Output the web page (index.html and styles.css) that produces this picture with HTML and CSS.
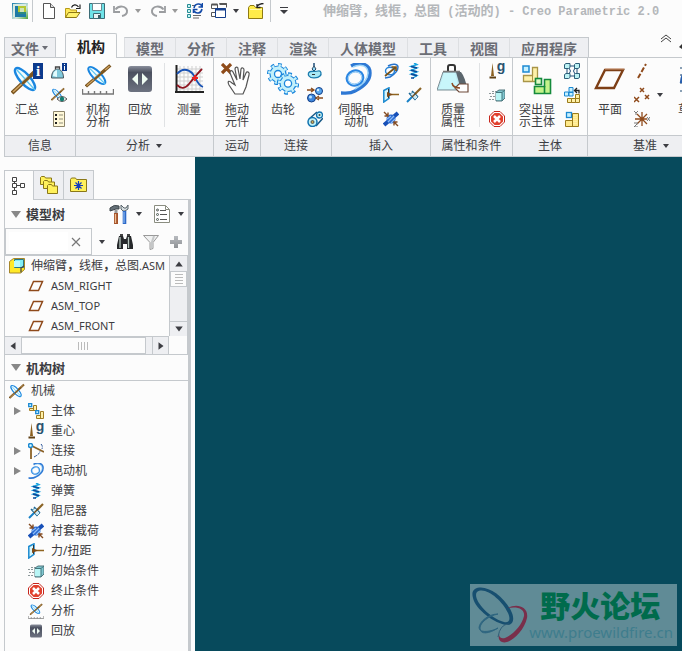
FILE: index.html
```html
<!DOCTYPE html>
<html lang="zh-CN">
<head>
<meta charset="utf-8">
<meta name="viewport" content="width=device-width, initial-scale=1">
<title>Creo Parametric 2.0</title>
<link rel="stylesheet" href="styles.css">
</head>
<body>
<svg class="defs" aria-hidden="true">
  <defs>
    <linearGradient id="gDark" x1="0" y1="0" x2="0" y2="1"><stop offset="0" stop-color="#8a8f9c"/><stop offset=".25" stop-color="#4b505f"/><stop offset="1" stop-color="#6d7280"/></linearGradient>
    <linearGradient id="gApp" x1="0" y1="0" x2="1" y2="1"><stop offset="0" stop-color="#1d7fae"/><stop offset=".6" stop-color="#cfe6da"/><stop offset="1" stop-color="#4da336"/></linearGradient>
    <linearGradient id="gPlus" x1="0" y1="0" x2="0" y2="1"><stop offset="0" stop-color="#b8bbbf"/><stop offset="1" stop-color="#8e9195"/></linearGradient>
  </defs>

  <symbol id="down" viewBox="0 0 8 8"><path d="M1 2h6L4 6z" fill="currentColor"/></symbol>
  <symbol id="app" viewBox="0 0 16 16"><rect width="16" height="16" fill="url(#gApp)"/><rect x="1" y="1" width="13" height="13" fill="#d8ebe2"/><path d="M3 3h3v8h8v3H3z" fill="#1d7aa6"/><path d="M6 3h8v8H6z" fill="#b5c832"/><path d="M8 5h4v4H8z" fill="#cfe3b8"/><path d="M6 9h8v2H6z" fill="#2c8a80"/></symbol>
  <symbol id="new" viewBox="0 0 16 16"><path d="M2.500 0.500h7l4 4v11h-11z" fill="#fff" stroke="#555"/><path d="M9.500 .5v4h4" fill="#ddd" stroke="#555"/></symbol>
  <symbol id="open" viewBox="0 0 16 16"><path d="M.5 14.500v-9h4l1 1.500h6v3" fill="#ffe95a" stroke="#b69a17"/><path d="M.5 14.500l3-5h11.500l-3.500 5z" fill="#fff26c" stroke="#8c7714"/><path d="M6.500 4.500c1-3 5-4 7-.5M15 1.500v4h-4" fill="none" stroke="#222" stroke-width="1.200"/></symbol>
  <symbol id="save" viewBox="0 0 16 16"><path d="M.5 .5h15v15H.5z" fill="#6fe3e8" stroke="#3c6c76"/><path d="M3.500 .5h9v7h-9z" fill="#fff" stroke="#6b8790"/><path d="M4.500 10.500h7v5h-7z" fill="#e8f4f5" stroke="#3c6c76"/><path d="M9 12h2v3H9z" fill="#3c5c66"/></symbol>
  <symbol id="undo" viewBox="0 0 16 16"><path d="M2.500 6.500C6 2 13 3 14 7.500c.5 3-2 5-5 5.500" fill="none" stroke="#9b9da0" stroke-width="2"/><path d="M1 3v6h6" fill="none" stroke="#9b9da0" stroke-width="1.800"/></symbol>
  <symbol id="regen" viewBox="0 0 16 16"><g fill="#c8f5f5" stroke="#268b94"><path d="M.5 1.500h3v3h-3zM.5 6.500h3v3h-3zM.5 11.500h3v3h-3z"/></g><path d="M5 2.500h3M6 12.500h8M6 15h6" stroke="#666"/><path d="M7 5c1-5 7-5 8-1.500M15.500 0v4h-4M15 6c-1 5-6 5-8 2M6.500 10V6.500h4" fill="none" stroke="#134aa8" stroke-width="1.600"/></symbol>
  <symbol id="windows" viewBox="0 0 16 16"><path d="M.5 1.500h6v4h-6zM8.500 .5h7v4M.5 9.500h4v4h-4z" fill="#fff" stroke="#555"/><path d="M.5 1.500h6M8.500 1h7" stroke="#555" stroke-width="2"/><path d="M4.500 5.500h10v9h-10z" fill="#fff" stroke="#153f8c"/><path d="M4 6.500h11" stroke="#153f8c" stroke-width="2"/></symbol>
  <symbol id="closef" viewBox="0 0 16 16"><path d="M.5 15.500v-11l1.500-2h4l1.500 2h7v11z" fill="#ffec4a" stroke="#8f7a12"/><path d="M2 6.500h12" stroke="#fff8b0"/><path d="M9 3.500c2-3 4-3 6.500-3M9 1v3.500h3.500" fill="none" stroke="#222" stroke-width="1.300"/></symbol>

  <symbol id="mech" viewBox="0 0 32 32"><path d="M1 30L30 3" stroke="#7b551f" stroke-width="4"/><path d="M2 29L29 4" stroke="#d3a765" stroke-width="1.500"/><g transform="rotate(48 14 16)"><ellipse cx="14" cy="16" rx="14" ry="5" fill="#e9fbff" fill-opacity=".6" stroke="#1a86e0" stroke-width="2.400"/><path d="M2 16h27" stroke="#59c4f0" stroke-width="1.400"/></g><path d="M11 21L24 9" stroke="#7b551f" stroke-width="2.600"/></symbol>
  <symbol id="summary" viewBox="0 0 32 32"><use href="#mech"/><rect x="22" y="0" width="10" height="16" fill="#0c3a8d"/><text x="27" y="13" text-anchor="middle" class="glyph-i" fill="#fff">i</text></symbol>
  <symbol id="analysis" viewBox="0 0 32 32"><svg x="3" y="0" width="27" height="25" viewBox="0 0 32 32" preserveAspectRatio="none"><use href="#mech"/></svg><path d="M.5 26v5h31v-5M6.500 28v3M12.500 28v3M18.500 28v3M24.500 28v3" fill="none" stroke="#777" stroke-width="1.400"/></symbol>
  <symbol id="massinfo" viewBox="0 0 16 16"><path d="M.5 15c0-6 3-9 6-9s6 3 6 9z" fill="#7fc9dc" stroke="#47565d"/><path d="M2 13c0-3 1-5 4-6v7z" fill="#e2fafc"/><path d="M4.500 6V4h4v2" fill="none" stroke="#444" stroke-width="1.300"/><rect x="11" y="0" width="5" height="8" fill="#0c3a8d"/><path d="M13 1h1v1h-1zM13 3h1v4h-1z" fill="#fff"/></symbol>
  <symbol id="mecheye" viewBox="0 0 16 16"><svg width="14" height="14" viewBox="0 0 32 32"><use href="#mech"/></svg><path d="M6 12q5-5 10 0-5 5-10 0z" fill="#eee" stroke="#555"/><circle cx="11" cy="12" r="2.200" fill="#137d71"/></symbol>
  <symbol id="sheet" viewBox="0 0 16 16"><path d="M2.500 .5h11v15h-11z" fill="#fff8d8" stroke="#8b836a"/><path d="M5 3v11" stroke="#222" stroke-dasharray="2 2" stroke-width="2"/><path d="M8 4h4M8 8h4M8 12h4" stroke="#8f8d7d"/></symbol>
  <symbol id="playback" viewBox="0 0 32 32"><rect x="4" y="3" width="24" height="26" rx="3" fill="url(#gDark)"/><path d="M14 10v12l-6-6zM18 10v12l6-6z" fill="#effbf2"/></symbol>
  <symbol id="measure" viewBox="0 0 32 32"><path d="M7 3v25M11 3v25M15 3v25M19 3v25M23 3v25M27 3v25M4 6h26M4 10h26M4 14h26M4 18h26M4 22h26M4 26h26" stroke="#cfcfcf"/><path d="M3.500 2v27M2 29h29" stroke="#222" stroke-width="2"/><path d="M4 11c5-6 11-5 15-1s5 12 11 14" fill="none" stroke="#1852b4" stroke-width="1.800"/><path d="M4 22c4 4 8 4 12-1s8-10 13-15" fill="none" stroke="#8e1620" stroke-width="1.800"/><path d="M22 12v6M19 15h6" stroke="#e22" stroke-width="1.800"/></symbol>
  <symbol id="drag" viewBox="0 0 32 32"><path d="M1 1l9 9M10 1L1 10" stroke="#8f4b19" stroke-width="3.200"/><path d="M14 31l-6-9c-2-4 0-5 3-2l3 2-5-12c0-3 2-3 3-1l4 8-2-11c0-2 3-3 3 0l2 10 1-10c1-2 3-1 3 1l-1 10 3-7c1-2 4-1 3 2l-3 12-3 7z" fill="#fff" stroke="#555" stroke-width="1.200"/></symbol>
  <symbol id="gears" viewBox="0 0 32 32">
    <g fill="none">
      <circle cx="11" cy="11" r="9" pathLength="16" stroke="#1a86dc" stroke-width="4" stroke-dasharray="1 1"/>
      <circle cx="11" cy="11" r="8" fill="#c3f0fa" stroke="#1a86dc" stroke-width="1.200"/>
      <circle cx="11" cy="11" r="8.500" pathLength="16" stroke="#c3f0fa" stroke-width="3" stroke-dasharray=".7 1.300" stroke-dashoffset="-.15"/>
      <circle cx="11" cy="11" r="3.500" fill="#fff" stroke="#1a86dc" stroke-width="1.300"/>
      <circle cx="21" cy="20.500" r="9" pathLength="16" stroke="#1a86dc" stroke-width="4.500" stroke-dasharray="1 1"/>
      <circle cx="21" cy="20.500" r="8" fill="#c3f0fa" stroke="#1a86dc" stroke-width="1.200"/>
      <circle cx="21" cy="20.500" r="8.500" pathLength="16" stroke="#c3f0fa" stroke-width="3.200" stroke-dasharray=".7 1.300" stroke-dashoffset="-.15"/>
      <circle cx="21" cy="20.500" r="3.600" fill="#fff" stroke="#1a86dc" stroke-width="1.300"/>
    </g>
  </symbol>
  <symbol id="cam" viewBox="0 0 16 16"><path d="M7 0v3" stroke="#1f4e7a" stroke-width="1.500"/><path d="M7 3l2 3-2 2-2-2z" fill="#9df" stroke="#27455c"/><path d="M1.500 10C3 7 8 9 11 8s4 3 2 5-9 3-11 0q-1-1-.5-3z" fill="#a9e8f5" stroke="#1b7bad" stroke-width="1.300"/><path d="M5 11.500h3" stroke="#333"/></symbol>
  <symbol id="contact" viewBox="0 0 16 16"><circle cx="12" cy="4" r="3.500" fill="#58a6ee" stroke="#123e86"/><circle cx="4.500" cy="11" r="4" fill="#3e86dc" stroke="#123e86"/><circle cx="3.500" cy="10" r="1.500" fill="#bfe5ff"/><circle cx="11" cy="3" r="1.200" fill="#d8f1ff"/><path d="M0 3h6M4 1l3 2-3 2M16 11h-5M12 9l-3 2 3 2" fill="none" stroke="#8a4a1a" stroke-width="1.300"/></symbol>
  <symbol id="belt" viewBox="0 0 16 16"><path d="M2 8l8-7M9 15l7-8" stroke="#1c5c88" stroke-width="1.500"/><circle cx="5.500" cy="11" r="4.500" fill="#bff2f8" stroke="#1273b0" stroke-width="1.500"/><circle cx="12.500" cy="4" r="3" fill="#bff2f8" stroke="#1273b0" stroke-width="1.300"/><circle cx="5.500" cy="11" r="1.500" fill="#c8a94e" stroke="#555"/><circle cx="12.500" cy="4" r="1" fill="#444"/></symbol>
  <symbol id="servo" viewBox="0 0 32 32"><path d="M11 3c9-5 19-2 19 7 0 8-7 14-15 18-5 3-9 2-14 2" fill="none" stroke="#2d78d4" stroke-width="3.400"/><path d="M13 4c8-4 15-1 15 6 0 7-6 12-13 16" fill="none" stroke="#9bd4f8" stroke-width="1.500"/><ellipse cx="15" cy="15" rx="8" ry="7" fill="none" stroke="#2b86e2" stroke-width="3" transform="rotate(-20 15 15)"/><ellipse cx="15" cy="15" rx="7" ry="6" fill="none" stroke="#b6e0fa" transform="rotate(-20 15 15)"/></symbol>
  <symbol id="forcemotor" viewBox="0 0 16 16"><path d="M5 3c5-3 10-2 10 1s-3 7-8 10l-5 1" fill="none" stroke="#2773cb" stroke-width="1.500"/><ellipse cx="7" cy="8" rx="4.500" ry="3.800" fill="none" stroke="#2583d7" stroke-width="1.400"/><path d="M2 13L13 4M8.500 4H13v4" fill="none" stroke="#7a5216" stroke-width="1.700"/></symbol>
  <symbol id="spring" viewBox="0 0 16 16"><path d="M8 0l3 1.500-6 2 6 1.500-6 2.300 6 1.500-6 2.300 6 1.500-4 2.400" fill="none" stroke="#19a4e0" stroke-width="1.400"/><path d="M5 3.500l6 1.500M5 7.300l6 1.500M5 11.100l6 1.500M5 15h3" stroke="#0c4a9a" stroke-width="1.600"/></symbol>
  <symbol id="force" viewBox="0 0 16 16"><path d="M.8 3.500L6 .8v10.500L.8 15z" fill="#d8f6fb" stroke="#1b8ad0" stroke-width="1.500"/><path d="M5.500 2v9" stroke="#333"/><path d="M4 7.500h12" stroke="#8f6420" stroke-width="1.500"/><path d="M10 7.500l-6-2.500v5z" fill="#7f4b19"/></symbol>
  <symbol id="damper" viewBox="0 0 16 16"><path d="M9 7l6-6" stroke="#8b6425" stroke-width="2.200"/><path d="M1 15l5-5" stroke="#1780c6" stroke-width="2"/><path d="M6 4l6 6M3 6l6.500 7" stroke="#1c6694" stroke-width="1.500"/><path d="M4 7l3-2 5 5-3 3z" fill="#cfeaf4" stroke="#2c7196" stroke-width=".8"/><path d="M6 10l4-4" stroke="#704d1e" stroke-width="1.500"/></symbol>
  <symbol id="bushing" viewBox="0 0 16 16"><path d="M1 14L15 2" stroke="#1750b8" stroke-width="4"/><circle cx="8" cy="8" r="4.500" fill="#2969d1"/><path d="M5 11l6-6M4 8l4-3M8 12l4-4" stroke="#8fbcf5" stroke-width="1.200"/><path d="M1 1l3.500 3.500M5 1.500V5H1.500M15 15l-3.500-3.500M11 14.500V11h3.500" fill="none" stroke="#834a20" stroke-width="1.400"/></symbol>
  <symbol id="mass" viewBox="0 0 32 32"><path d="M6 9h16l8 18H0z" fill="#bfe9f2" stroke="#7b8f96"/><path d="M19 9h5q4 5 6 16l-6 2z" fill="#5b666d"/><path d="M7 10h11l4 16H2z" fill="#c8f6fb"/><path d="M11 8V4q0-2 2-2h3q2 0 2 2v4" fill="none" stroke="#333" stroke-width="2"/><path d="M6 8.500h17" stroke="#777" stroke-width="1.500"/><path d="M18 25l4-4h9v8h-9z" fill="#fff" stroke="#6e4a3a" stroke-width="1.200"/><path d="M15 20q1 5 8 5" fill="none" stroke="#8c4b23" stroke-width="1.500"/></symbol>
  <symbol id="gravity" viewBox="0 0 16 16"><path d="M3.500 0l1.500 13H2z" fill="#8b6020"/><path d="M.5 14.500h6.500" stroke="#5e3e12" stroke-width="2"/><text x="12" y="8" text-anchor="middle" class="glyph-g" fill="#29526f">g</text></symbol>
  <symbol id="initial" viewBox="0 0 16 16"><path d="M7 5l3-2h6v8l-3 3H7z" fill="#7fc7d0" stroke="#54767c"/><path d="M7 6h6v7H7z" fill="#b8f5f5"/><path d="M7 5.500h6l3-2.500M13 6v8" fill="none" stroke="#44757d"/><path d="M0 6.500h6M1 9.500h5M0 12.500h6M3 4.500h4" stroke="#8c9799" stroke-dasharray="2 1"/></symbol>
  <symbol id="stop" viewBox="0 0 16 16"><path d="M5 .5h6L15.500 5v6L11 15.500H5L.5 11V5z" fill="#fff" stroke="#c6261d"/><path d="M5.600 2h4.800L14 5.600v4.800L10.400 14H5.600L2 10.400V5.600z" fill="#e1402e"/><path d="M5 5l6 6M11 5l-6 6" stroke="#fff" stroke-width="2.500"/></symbol>
  <symbol id="highlight" viewBox="0 0 32 32"><path d="M11.500 4.500h5v14h-14v-6h9z" fill="#fff1a9" stroke="#a99548" stroke-width="1.300"/><path d="M11.500 12v6" stroke="#a99548"/><rect x="2" y="3" width="6" height="6" fill="#c6f1ff" stroke="#1c89d2" stroke-width="1.500"/><path d="M23.500 16.500h6v14h-16v-7h10z" fill="#c4f38a" stroke="#158a3c" stroke-width="1.600"/><path d="M23.500 23v7" stroke="#158a3c" stroke-width="1.600"/><rect x="14.500" y="15.500" width="6" height="6" fill="#dff9c5" stroke="#158a3c" stroke-width="1.600"/></symbol>
  <symbol id="cubes" viewBox="0 0 16 16"><path d="M4 3h8M3 4v8M13 4v8M4 13h8M5 5q3 3 0 6M11 5q-3 3 0 6" stroke="#1e4e79" fill="none"/><g fill="#bdf3f5" stroke="#2d5f78"><path d="M.5 1.500L2 .5h4v4l-1.500 1h-4zM10.500 1.500l1-1h4v4l-1.500 1h-3.500zM.5 11.500l1.500-1h4v4l-1.500 1h-4zM10.500 11.500l1-1h4v4l-1.500 1h-3.500z"/></g></symbol>
  <symbol id="redef" viewBox="0 0 16 16"><path d="M5 .5h4v5h-4zM.5 5h4v4h-4zM5 5h4v4H5z" fill="#c6f1ff" stroke="#1c89d2"/><path d="M3.500 11.500h4v4h-4zM7.500 11.500h4v4h-4zM11.500 11.500h4v4h-4zM11.500 7.500h4v4h-4z" fill="#fff1a9" stroke="#9b7b1b"/><path d="M11 3.500h4v3M13 1l-2.500 2.500L13 6" fill="none" stroke="#222" stroke-width="1.300"/></symbol>
  <symbol id="ground" viewBox="0 0 16 16"><path d="M8.500 2.500h6v13h-13v-6h7z" fill="#ffe98a" stroke="#9b7b1b"/><path d="M8.500 9v6" stroke="#9b7b1b"/><path d="M10 4v10M12 4v10" stroke="#fff6bf" stroke-dasharray="1 1"/><rect x="2.500" y="1.500" width="5" height="5" fill="#c6f1ff" stroke="#1c89d2" stroke-width="1.300"/></symbol>
  <symbol id="plane" viewBox="0 0 32 32"><path d="M11 7h18l-9 18H2z" fill="none" stroke="#7d3f16" stroke-width="2.400"/><path d="M11 6h19" stroke="#d09b78"/></symbol>
  <symbol id="planes" viewBox="0 0 16 16"><path d="M5.500 3.500h9l-4 9h-9z" fill="none" stroke="#8f4a1b" stroke-width="1.500"/></symbol>
  <symbol id="axis" viewBox="0 0 16 16"><path d="M4 15l8-14" stroke="#8f4a1b" stroke-width="2" stroke-dasharray="5 2"/></symbol>
  <symbol id="points" viewBox="0 0 16 16"><path d="M6 1l4 4M10 1L6 5M0 10l5 5M5 10l-5 5M11 8l4 4M15 8l-4 4" stroke="#8f4a1b" stroke-width="1.500"/></symbol>
  <symbol id="csys" viewBox="0 0 16 16"><path d="M8 1v14M1 8h12M3 3l10 10M13 3L3 13" stroke="#8f4a1b" stroke-width="1.300"/><path d="M0 0l2 2 2-2M2 2v2M13 6l3 4M16 6l-3 4M0 12h4l-4 4h4" fill="none" stroke="#777"/></symbol>
  <symbol id="sketch" viewBox="0 0 32 32"><path d="M6 5h26M6 12h26M6 20h26M6 28h26" stroke="#8aa0b5" stroke-width="2" stroke-dasharray="2 3"/><path d="M7 20Q8 7 18 5t13 19" fill="none" stroke="#285fae" stroke-width="2.500"/></symbol>

  <symbol id="treetab" viewBox="0 0 16 20"><path d="M3.500 5v9M4 9.500h5" stroke="#444" fill="none"/><path d="M1.500 1.500h4v4h-4zM1.500 7.500h4v4h-4zM1.500 14.500h4v4h-4zM9.500 7.500h4v4h-4z" fill="#fff" stroke="#444"/></symbol>
  <symbol id="folders" viewBox="0 0 20 20"><g fill="#fff15b" stroke="#8a7718"><path d="M1.500 9.500v-7l1-1h3l1 1.500h6v6.500z"/><path d="M4.500 13.500v-7l1-1h3l1 1.500h6v6.500z"/><path d="M8.500 18.500v-8l1-1h3l1 1.500h5v7.500z"/></g></symbol>
  <symbol id="favs" viewBox="0 0 20 20"><path d="M1.500 16.500v-12l1-1.500h4l1 1.500h10v12z" fill="#fff15b" stroke="#8a7718"/><path d="M9.500 6v9M5 10.500h9M6.500 7.500l6 6M12.500 7.500l-6 6" stroke="#123cbc" stroke-width="1.200"/></symbol>
  <symbol id="tools" viewBox="0 0 20 20"><path d="M1 4q4-4 9-2v3H7L4 6 1 7z" fill="#657078" stroke="#3e464b"/><path d="M7 6v4" stroke="#999" stroke-width="3"/><path d="M7 9v11" stroke="#a4532b" stroke-width="4"/><path d="M6.500 10v9" stroke="#efc199" stroke-width="1.300"/><path d="M12 1v4l2 2h2l3-2V1l-2 3h-2z" fill="#d5dcdf" stroke="#59646b"/><path d="M15.500 7v13" stroke="#2d69c8" stroke-width="3.600"/><path d="M15 8v11" stroke="#9dc7f6"/></symbol>
  <symbol id="list" viewBox="0 0 18 20"><path d="M1.500 1.500h11l4 4v13h-15z" fill="#fff" stroke="#8a8d80"/><path d="M12.500 1.500v4h4" fill="none" stroke="#8a8d80"/><path d="M7 6.500h6M7 10.500h7M7 15.500h7" stroke="#555"/><g fill="#dfe" stroke="#555"><circle cx="4.500" cy="6" r="1"/><circle cx="4.500" cy="10.500" r="1"/><circle cx="4.500" cy="15.500" r="1"/></g></symbol>
  <symbol id="bino" viewBox="0 0 16 16"><path d="M2 2h4l1 3h2l1-3h4l2 9v4h-6v-5H6v5H0v-4z" fill="#26282b"/><path d="M3 3v11M11.500 3v11" stroke="#b8c8c0" stroke-width="1.300"/><path d="M3 0h3v2H3zM10 0h3v2h-3z" fill="#444"/></symbol>
  <symbol id="funnel" viewBox="0 0 16 16"><path d="M.5 1.500h15L10 8.500v6l-3 1v-7z" fill="#f0f1f1" stroke="#999"/><path d="M11 2l-2 6v6" fill="none" stroke="#c5c7c8" stroke-width="2"/></symbol>
  <symbol id="plus" viewBox="0 0 12 12"><path d="M4 0h4v4h4v4H8v4H4V8H0V4h4z" fill="url(#gPlus)"/></symbol>
  <symbol id="asm" viewBox="0 0 16 16"><path d="M.5 3.500l4-3h11v11l-4 3.500H.5z" fill="#ffe928" stroke="#a6862a"/><path d="M5.500 1.500h9v8h-9z" fill="#82eef5" stroke="#267789"/><path d="M5 3h6v6H5z" fill="#b9fbfd"/><path d="M12 14.500V10l3-2" fill="none" stroke="#444" stroke-width="1.300"/></symbol>
  <symbol id="bodies" viewBox="0 0 16 16"><path d="M5.500 2.500h3v5h-7v-2h4zM12.500 8.500h3v7h-7v-3h4z" fill="#fff1a9" stroke="#a07c25"/><path d="M5.500 5v3M12.500 12v3" stroke="#a07c25"/><path d="M.7 .7h3v3h-3zM7.700 7.700h3v3h-3z" fill="#c6f1ff" stroke="#1c89d2" stroke-width="1.300"/></symbol>
  <symbol id="joint" viewBox="0 0 16 16"><path d="M3 4v12M4 3l12 6" stroke="#8b6228" stroke-width="1.800"/><path d="M6 14q6-3 6-6M13 1q2 2 1 5" fill="none" stroke="#244f94" stroke-dasharray="3 1"/><circle cx="2.500" cy="2.500" r="2" fill="#d9f9fc" stroke="#1c89d2" stroke-width="1.500"/></symbol>
</svg>

<header class="titlebar">
  <nav class="quick" aria-label="快速访问">
    <svg class="i16 logo"><use href="#app"/></svg>
    <i class="sep"></i>
    <button class="q" aria-label="新建"><svg class="i16"><use href="#new"/></svg></button>
    <button class="q" aria-label="打开"><svg class="i16"><use href="#open"/></svg></button>
    <button class="q" aria-label="保存"><svg class="i16"><use href="#save"/></svg></button>
    <button class="q drop dim" aria-label="撤消"><svg class="i16"><use href="#undo"/></svg><svg class="i8"><use href="#down"/></svg></button>
    <button class="q drop dim" aria-label="重做"><svg class="i16 flip"><use href="#undo"/></svg><svg class="i8"><use href="#down"/></svg></button>
    <button class="q" aria-label="再生"><svg class="i16"><use href="#regen"/></svg></button>
    <button class="q drop" aria-label="窗口"><svg class="i16"><use href="#windows"/></svg><svg class="i8"><use href="#down"/></svg></button>
    <button class="q" aria-label="关闭"><svg class="i16"><use href="#closef"/></svg></button>
    <i class="sep last"></i>
    <button class="q" aria-label="自定义"><svg viewBox="0 0 8 10" width="10" height="10"><path d="M0 1.500h8" stroke="currentColor"/><path d="M0 4h8L4 8z" fill="currentColor"/></svg></button>
  </nav>
  <h1 class="title">伸缩臂<b class="comma">，</b>线框<b class="comma">，</b>总图<span class="latin"> (</span>活动的<span class="latin">) - Creo Parametric 2.0</span></h1>
</header>

<nav class="tabs">
  <button class="tab file">文件<svg class="i8"><use href="#down"/></svg></button>
  <button class="tab active">机构</button>
  <div class="tabset">
    <button class="tab">模型</button><button class="tab">分析</button><button class="tab">注释</button><button class="tab">渲染</button><button class="tab">人体模型</button><button class="tab">工具</button><button class="tab">视图</button><button class="tab">应用程序</button>
  </div>
  <button class="collapse" aria-label="折叠"><svg width="12" height="9" viewBox="0 0 12 9"><path d="M1 5l5-4 5 4M1 8l5-4 5 4" fill="none" stroke="#444"/></svg></button>
  <svg class="edge" width="3" height="5" viewBox="0 0 3 5"><path d="M3 0v5L0 3z" fill="#333"/></svg>
</nav>

<section class="ribbon">
  <div class="group">
    <div class="tools">
      <button class="big"><svg class="i32"><use href="#summary"/></svg>汇总</button>
      <div class="col"><button aria-label="质量信息"><svg class="i16"><use href="#massinfo"/></svg></button><button aria-label="机构显示"><svg class="i16"><use href="#mecheye"/></svg></button><button aria-label="详细信息"><svg class="i16"><use href="#sheet"/></svg></button></div>
    </div>
    <footer>信息</footer>
  </div>
  <div class="group">
    <div class="tools">
      <button class="big"><svg class="i32"><use href="#analysis"/></svg>机构<br>分析</button>
      <button class="big slim"><svg class="i32"><use href="#playback"/></svg>回放</button>
      <i class="rule"></i>
      <button class="big"><svg class="i32"><use href="#measure"/></svg>测量</button>
    </div>
    <footer>分析<svg class="i8"><use href="#down"/></svg></footer>
  </div>
  <div class="group">
    <div class="tools center"><button class="big"><svg class="i32"><use href="#drag"/></svg>拖动<br>元件</button></div>
    <footer>运动</footer>
  </div>
  <div class="group">
    <div class="tools">
      <button class="big"><svg class="i32"><use href="#gears"/></svg>齿轮</button>
      <div class="col"><button aria-label="凸轮"><svg class="i16"><use href="#cam"/></svg></button><button aria-label="3D 接触"><svg class="i16"><use href="#contact"/></svg></button><button aria-label="带"><svg class="i16"><use href="#belt"/></svg></button></div>
    </div>
    <footer>连接</footer>
  </div>
  <div class="group">
    <div class="tools spread">
      <button class="big"><svg class="i32"><use href="#servo"/></svg>伺服电<br>动机</button>
      <div class="col"><button aria-label="执行电动机"><svg class="i16"><use href="#forcemotor"/></svg></button><button aria-label="力/扭矩"><svg class="i16"><use href="#force"/></svg></button><button aria-label="衬套载荷"><svg class="i16"><use href="#bushing"/></svg></button></div>
      <div class="col"><button aria-label="弹簧"><svg class="i16"><use href="#spring"/></svg></button><button aria-label="阻尼器"><svg class="i16"><use href="#damper"/></svg></button></div>
    </div>
    <footer>插入</footer>
  </div>
  <div class="group">
    <div class="tools">
      <button class="big"><svg class="i32"><use href="#mass"/></svg>质量<br>属性</button>
      <i class="rule"></i>
      <div class="col fill"><button aria-label="重力"><svg class="i16"><use href="#gravity"/></svg></button><button aria-label="初始条件"><svg class="i16"><use href="#initial"/></svg></button><button aria-label="终止条件"><svg class="i16"><use href="#stop"/></svg></button></div>
    </div>
    <footer>属性和条件</footer>
  </div>
  <div class="group">
    <div class="tools spread">
      <button class="big"><svg class="i32"><use href="#highlight"/></svg>突出显<br>示主体</button>
      <div class="col"><button aria-label="重新连接"><svg class="i16"><use href="#cubes"/></svg></button><button aria-label="重定义主体"><svg class="i16"><use href="#redef"/></svg></button><button aria-label="基础主体"><svg class="i16"><use href="#ground"/></svg></button></div>
    </div>
    <footer>主体</footer>
  </div>
  <div class="group">
    <div class="tools">
      <button class="big"><svg class="i32"><use href="#plane"/></svg>平面</button>
      <div class="col"><button aria-label="轴"><svg class="i16"><use href="#axis"/></svg></button><button aria-label="点"><svg class="i16"><use href="#points"/></svg></button><button aria-label="坐标系"><svg class="i16"><use href="#csys"/></svg></button></div>
      <button class="more" aria-label="更多点"><svg class="i8"><use href="#down"/></svg></button>
      <button class="big"><svg class="i32"><use href="#sketch"/></svg>草绘</button>
    </div>
    <footer>基准<svg class="i8"><use href="#down"/></svg></footer>
  </div>
</section>

<main class="work">
  <aside class="side">
    <div class="sidetabs">
      <button class="active" aria-label="模型树"><svg width="16" height="20"><use href="#treetab"/></svg></button>
      <button aria-label="文件夹"><svg width="20" height="20"><use href="#folders"/></svg></button>
      <button aria-label="收藏夹"><svg width="20" height="20"><use href="#favs"/></svg></button>
    </div>
    <div class="panel">
      <div class="head">
        <i class="fold"></i><h2>模型树</h2>
        <div class="headtools">
          <button aria-label="设置"><svg width="20" height="20"><use href="#tools"/></svg><svg class="i8"><use href="#down"/></svg></button>
          <button aria-label="显示"><svg width="18" height="20"><use href="#list"/></svg><svg class="i8"><use href="#down"/></svg></button>
        </div>
      </div>
      <div class="search">
        <div class="box"><input type="text" aria-label="搜索"><button aria-label="清除"><svg width="10" height="10" viewBox="0 0 10 10"><path d="M1 1l8 8M9 1L1 9" stroke="#777" stroke-width="1.200"/></svg></button></div>
        <div class="actions">
          <button aria-label="选项"><svg class="i8"><use href="#down"/></svg></button>
          <button aria-label="查找"><svg class="i16"><use href="#bino"/></svg></button>
          <button aria-label="过滤"><svg class="i16"><use href="#funnel"/></svg></button>
          <button aria-label="添加"><svg width="12" height="12"><use href="#plus"/></svg></button>
        </div>
      </div>
      <div class="modelbox">
        <ul class="tree">
          <li class="root"><svg class="i16"><use href="#asm"/></svg>伸缩臂<b class="comma">，</b>线框<b class="comma">，</b>总图<span class="small">.ASM</span></li>
          <li class="small"><svg class="i16"><use href="#planes"/></svg>ASM_RIGHT</li>
          <li class="small"><svg class="i16"><use href="#planes"/></svg>ASM_TOP</li>
          <li class="small"><svg class="i16"><use href="#planes"/></svg>ASM_FRONT</li>
        </ul>
        <div class="vbar"><button aria-label="向上"><svg class="i10 up"><use href="#down"/></svg></button><i class="thumb"></i><button class="end" aria-label="向下"><svg class="i10"><use href="#down"/></svg></button></div>
        <div class="hbar"><button aria-label="向左"><svg class="i10 left"><use href="#down"/></svg></button><i class="thumb"></i><button class="end" aria-label="向右"><svg class="i10 right"><use href="#down"/></svg></button></div>
      </div>
      <div class="head second"><i class="fold"></i><h2>机构树</h2></div>
      <ul class="tree">
        <li class="root"><svg class="i16"><use href="#mech"/></svg>机械</li>
        <li class="closed"><svg class="i16"><use href="#bodies"/></svg>主体</li>
        <li><svg class="i16"><use href="#gravity"/></svg>重心</li>
        <li class="closed"><svg class="i16"><use href="#joint"/></svg>连接</li>
        <li class="closed"><svg class="i16"><use href="#servo"/></svg>电动机</li>
        <li><svg class="i16"><use href="#spring"/></svg>弹簧</li>
        <li><svg class="i16"><use href="#damper"/></svg>阻尼器</li>
        <li><svg class="i16"><use href="#bushing"/></svg>衬套载荷</li>
        <li><svg class="i16"><use href="#force"/></svg>力/扭距</li>
        <li><svg class="i16"><use href="#initial"/></svg>初始条件</li>
        <li><svg class="i16"><use href="#stop"/></svg>终止条件</li>
        <li><svg class="i16"><use href="#analysis"/></svg>分析</li>
        <li><svg class="i16"><use href="#playback"/></svg>回放</li>
      </ul>
    </div>
  </aside>
  <section class="canvas">
    <div class="watermark">
      <svg width="58" height="58" viewBox="0 0 58 58">
        <path fill-rule="evenodd" fill="#174f70" d="M4 3C14-3 34 10 41 27c3 8 0 12-5 12C24 38 4 23 2 12 1 8 1 5 4 3zM6 6c-5 6 10 25 27 30 5 1 7-2 4-9C31 14 14 0 6 6z"/>
        <path fill="#792f4b" d="M37 22c9-5 21-1 19 10-3 14-18 27-25 24-3-1-4-4-3-8 0 4 3 5 6 4 8-3 17-13 19-22 1-7-6-10-16-8z"/>
        <path fill="#2f6680" d="M27 28C17 28 8 36 8 42c1 6 14 3 19 0-9 6-18 7-18 0 0-5 8-12 18-14z" stroke="#2f6680"/>
        <path d="M38 38q-9 0-11 13" fill="none" stroke="#315f78"/>
      </svg>
      <div class="words"><strong>野火论坛</strong><span>www.proewildfire.cn</span></div>
    </div>
  </section>
</main>
</body>
</html>
```
FILE: styles.css
```css
:root {
  --bg: #fcfcfc;
  --line: #c5c9cd;
  --shade: #eeeff2;
  --text: #3c3d42;
  --muted: #6b6d75;
  --sea: #074a5c;
}
* { box-sizing: border-box; }
body {
  margin: 0;
  min-height: 100vh;
  display: flex;
  flex-direction: column;
  overflow: hidden;
  background: var(--bg);
  color: var(--text);
  font: 12px/20px "Noto Sans", "Noto Sans CJK SC", sans-serif;
}
button {
  display: flex;
  align-items: center;
  justify-content: center;
  margin: 0;
  padding: 0;
  border: 0;
  background: none;
  color: inherit;
  font: inherit;
}
h1, h2, ul { margin: 0; padding: 0; }
svg { flex: none; display: block; }
.defs { position: absolute; width: 0; height: 0; }
.i8 { width: 8px; height: 8px; }
.i10 { width: 10px; height: 10px; }
.i16 { width: 16px; height: 16px; }
.i32 { width: 32px; height: 32px; }
.flip { transform: scaleX(-1); }
.up { transform: rotate(180deg); }
.left { transform: rotate(90deg); }
.right { transform: rotate(-90deg); }
.glyph-i { font: bold 15px "Liberation Serif", serif; }
.glyph-g { font: bold 14px "Liberation Sans", sans-serif; }
.comma { font-weight: bold; }
.small { font-size: 11px; }

.titlebar {
  display: flex;
  align-items: center;
  height: 22px;
  padding-left: 12px;
}
.quick { display: flex; align-items: center; gap: 8px; }
.quick .sep { width: 1px; height: 22px; background: var(--line); }
.quick .last { margin-left: -2px; }
.logo { margin-right: -4px; }
.drop { gap: 5px; }
.dim { color: #999; }
.title {
  margin-left: 34px;
  white-space: pre;
  color: #b4b7ba;
  font: bold 13px/20px "Noto Sans CJK SC", sans-serif;
}
.latin { font: bold 12px/20px "Liberation Mono", monospace; }

.tabs {
  display: flex;
  align-items: flex-end;
  height: 35px;
  padding-left: 4px;
}
.tab {
  height: 20px;
  padding: 0 11px;
  border: 1px solid var(--line);
  border-bottom: 0;
  background: var(--shade);
  color: var(--muted);
  font: bold 14px/18px "Noto Sans CJK SC", sans-serif;
}
.file { padding: 0 6px; gap: 2px; margin-right: 9px; }
.tabs .active {
  height: 25px;
  margin-bottom: -1px;
  border-radius: 2px 2px 0 0;
  background: var(--bg);
  color: #222;
  z-index: 1;
}
.tabset { display: flex; margin-left: 7px; border-right: 1px solid var(--line); }
.tabset .tab { border-right: 0; border-left-color: #dddfe2; }
.collapse { margin: 0 7px 14px auto; }
.edge { margin-bottom: 8px; }

.ribbon {
  display: grid;
  grid-template-columns: 71px 138px 47px 71px 99px 82px 75px minmax(128px, 1fr);
  margin-left: 4px;
  border: 1px solid var(--line);
  border-width: 1px 0 1px 1px;
}
.group { border-right: 1px solid var(--line); }
.tools { display: flex; height: 77px; padding-top: 5px; }
.tools.center { justify-content: center; }
.spread { gap: 3px; padding-left: 2px; }
.big {
  flex-direction: column;
  justify-content: flex-start;
  flex: none;
  width: 44px;
  line-height: 12px;
}
.big .i32 { margin-bottom: 9px; }
.slim { width: 40px; }
.col { display: flex; flex-direction: column; align-items: center; gap: 8px; width: 20px; flex: none; }
.fill { flex: 1; }
.rule { width: 1px; height: 64px; margin: 0 2px 0 4px; background: #e0e2e4; }
.more { width: 16px; height: 64px; }
.group footer {
  display: flex;
  align-items: center;
  justify-content: center;
  gap: 5px;
  height: 21px;
  border-top: 1px solid var(--line);
  background: var(--shade);
}

.work { display: flex; flex: 1; }
.side {
  display: flex;
  flex-direction: column;
  flex: none;
  width: 195px;
  padding: 13px 4px 0 4px;
}
.sidetabs { display: flex; }
.sidetabs button {
  width: 30px;
  height: 29px;
  border: 1px solid var(--line);
  border-bottom: 0;
  border-left-width: 0;
  background: var(--shade);
}
.sidetabs .active {
  border-left-width: 1px;
  margin-bottom: -1px;
  height: 30px;
  background: var(--bg);
  z-index: 1;
}
.panel {
  flex: 1;
  border: 1px solid var(--line);
  border-width: 1px 3px 0 1px;
}
.head { display: flex; align-items: center; height: 28px; padding: 0 3px 0 6px; }
.second { height: 26px; border-bottom: 1px solid var(--line); }
.head h2 { font: bold 13px/20px "Noto Sans CJK SC", sans-serif; }
.fold {
  margin-right: 5px;
  border: 5px solid transparent;
  border-top: 7px solid #888;
  border-bottom: 0;
}
.headtools { display: flex; gap: 10px; margin-left: auto; }
.headtools button { gap: 6px; }
.search { display: flex; height: 27px; }
.box { display: flex; width: 87px; border: 1px solid var(--line); }
.box input { flex: 1; min-width: 0; margin: 3px; border: 0; background: #fff; }
.box button { margin-right: 10px; }
.actions { display: flex; align-items: center; justify-content: space-between; flex: 1; padding: 0 6px; }
.modelbox {
  display: grid;
  grid-template-columns: 1fr 18px;
  border: 1px solid var(--line);
  border-left: 0;
}
.tree { list-style: none; }
.tree li { display: flex; align-items: center; height: 20px; padding-left: 23px; white-space: nowrap; }
.tree .i16 { margin-right: 7px; }
.tree .root { padding-left: 4px; }
.tree .root .i16 { margin-right: 6px; }
.tree .closed { padding-left: 9px; }
.closed::before {
  content: "";
  margin-right: 7px;
  border: 4px solid transparent;
  border-left: 7px solid #888;
  border-right: 0;
}
.vbar, .hbar { display: flex; background: var(--shade); }
.vbar { flex-direction: column; border-left: 1px solid var(--line); }
.hbar { border-top: 1px solid var(--line); border-right: 1px solid var(--line); }
.vbar button { height: 15px; }
.hbar button { width: 16px; height: 17px; }
.vbar .thumb {
  height: 16px;
  border: 1px solid var(--line);
  background: repeating-linear-gradient(#bbb 0 1px, transparent 1px 3px) center / 8px 10px no-repeat var(--bg);
}
.hbar .thumb {
  flex: 1;
  margin-right: 6px;
  border: 1px solid var(--line);
  background: repeating-linear-gradient(90deg, #bbb 0 1px, transparent 1px 3px) center / 12px 8px no-repeat var(--bg);
}
.end { margin-top: auto; }
.vbar .end { border-top: 1px solid var(--line); }
.hbar .end { border-left: 1px solid var(--line); }

.canvas {
  display: flex;
  flex: 1;
  align-items: flex-end;
  justify-content: flex-end;
  padding: 5px;
  background: var(--sea);
}
.watermark {
  display: flex;
  align-items: center;
  height: 62px;
  padding: 0 4px 0 1px;
  background: #608b96;
}
.words { display: flex; flex-direction: column; }
.words strong {
  margin-left: 11px;
  color: #006b4c;
  font: 900 30px/34px "Noto Sans CJK SC", sans-serif;
}
.words span { color: #3e7d8d; font: 15px/22px "Noto Sans", sans-serif; }
```
